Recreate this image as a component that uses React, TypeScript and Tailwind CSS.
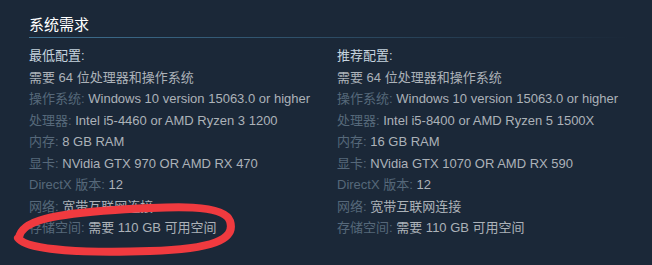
const minReqs = [
  { label: "操作系统:", value: "Windows 10 version 15063.0 or higher" },
  { label: "处理器:", value: "Intel i5-4460 or AMD Ryzen 3 1200" },
  { label: "内存:", value: "8 GB RAM" },
  { label: "显卡:", value: "NVidia GTX 970 OR AMD RX 470" },
  { label: "DirectX 版本:", value: "12" },
  { label: "网络:", value: "宽带互联网连接" },
  { label: "存储空间:", value: "需要 110 GB 可用空间" },
];

const recReqs = [
  { label: "操作系统:", value: "Windows 10 version 15063.0 or higher" },
  { label: "处理器:", value: "Intel i5-8400 or AMD Ryzen 5 1500X" },
  { label: "内存:", value: "16 GB RAM" },
  { label: "显卡:", value: "NVidia GTX 1070 OR AMD RX 590" },
  { label: "DirectX 版本:", value: "12" },
  { label: "网络:", value: "宽带互联网连接" },
  { label: "存储空间:", value: "需要 110 GB 可用空间" },
];

function ReqColumn({
  title,
  rows,
}: {
  title: string;
  rows: { label: string; value: string }[];
}) {
  return (
    <div className="w-[308px] text-[13px] leading-[21.5px] text-[#acb2b8]">
      <p className="text-[#c6d4df]">{title}</p>
      <p>需要 64 位处理器和操作系统</p>
      {rows.map((row) => (
        <p key={row.label}>
          <span className="text-[#56687a]">{row.label}</span> {row.value}
        </p>
      ))}
    </div>
  );
}

export default function App() {
  return (
    <main
      className="relative h-[265px] w-[652px] overflow-hidden bg-[#1b2838] pl-[29px] pt-[15px]"
      style={{ fontFamily: '"Liberation Sans", Arial, "Noto Sans CJK SC", sans-serif' }}
    >
      <h2 className="text-[15px] leading-[20px] text-[#ffffff]">系统需求</h2>
      <div className="mt-[2px] h-px w-[600px] bg-gradient-to-r from-[#3f7192] to-transparent" />

      <div className="mt-[7px] flex">
        <ReqColumn title="最低配置:" rows={minReqs} />
        <ReqColumn title="推荐配置:" rows={recReqs} />
      </div>

      {/* hand-drawn highlight */}
      <svg
        className="pointer-events-none absolute left-0 top-0"
        width="652"
        height="265"
        viewBox="0 0 652 265"
      >
        <path
          d="M 19 238 C 21 220, 55 214, 115 210 C 175 206, 224 204, 230 221 C 236 240, 212 249, 150 251 C 90 253, 27 251, 18 238"
          fill="none"
          stroke="#f03a3f"
          strokeWidth="8"
          strokeLinecap="round"
        />
      </svg>
    </main>
  );
}
